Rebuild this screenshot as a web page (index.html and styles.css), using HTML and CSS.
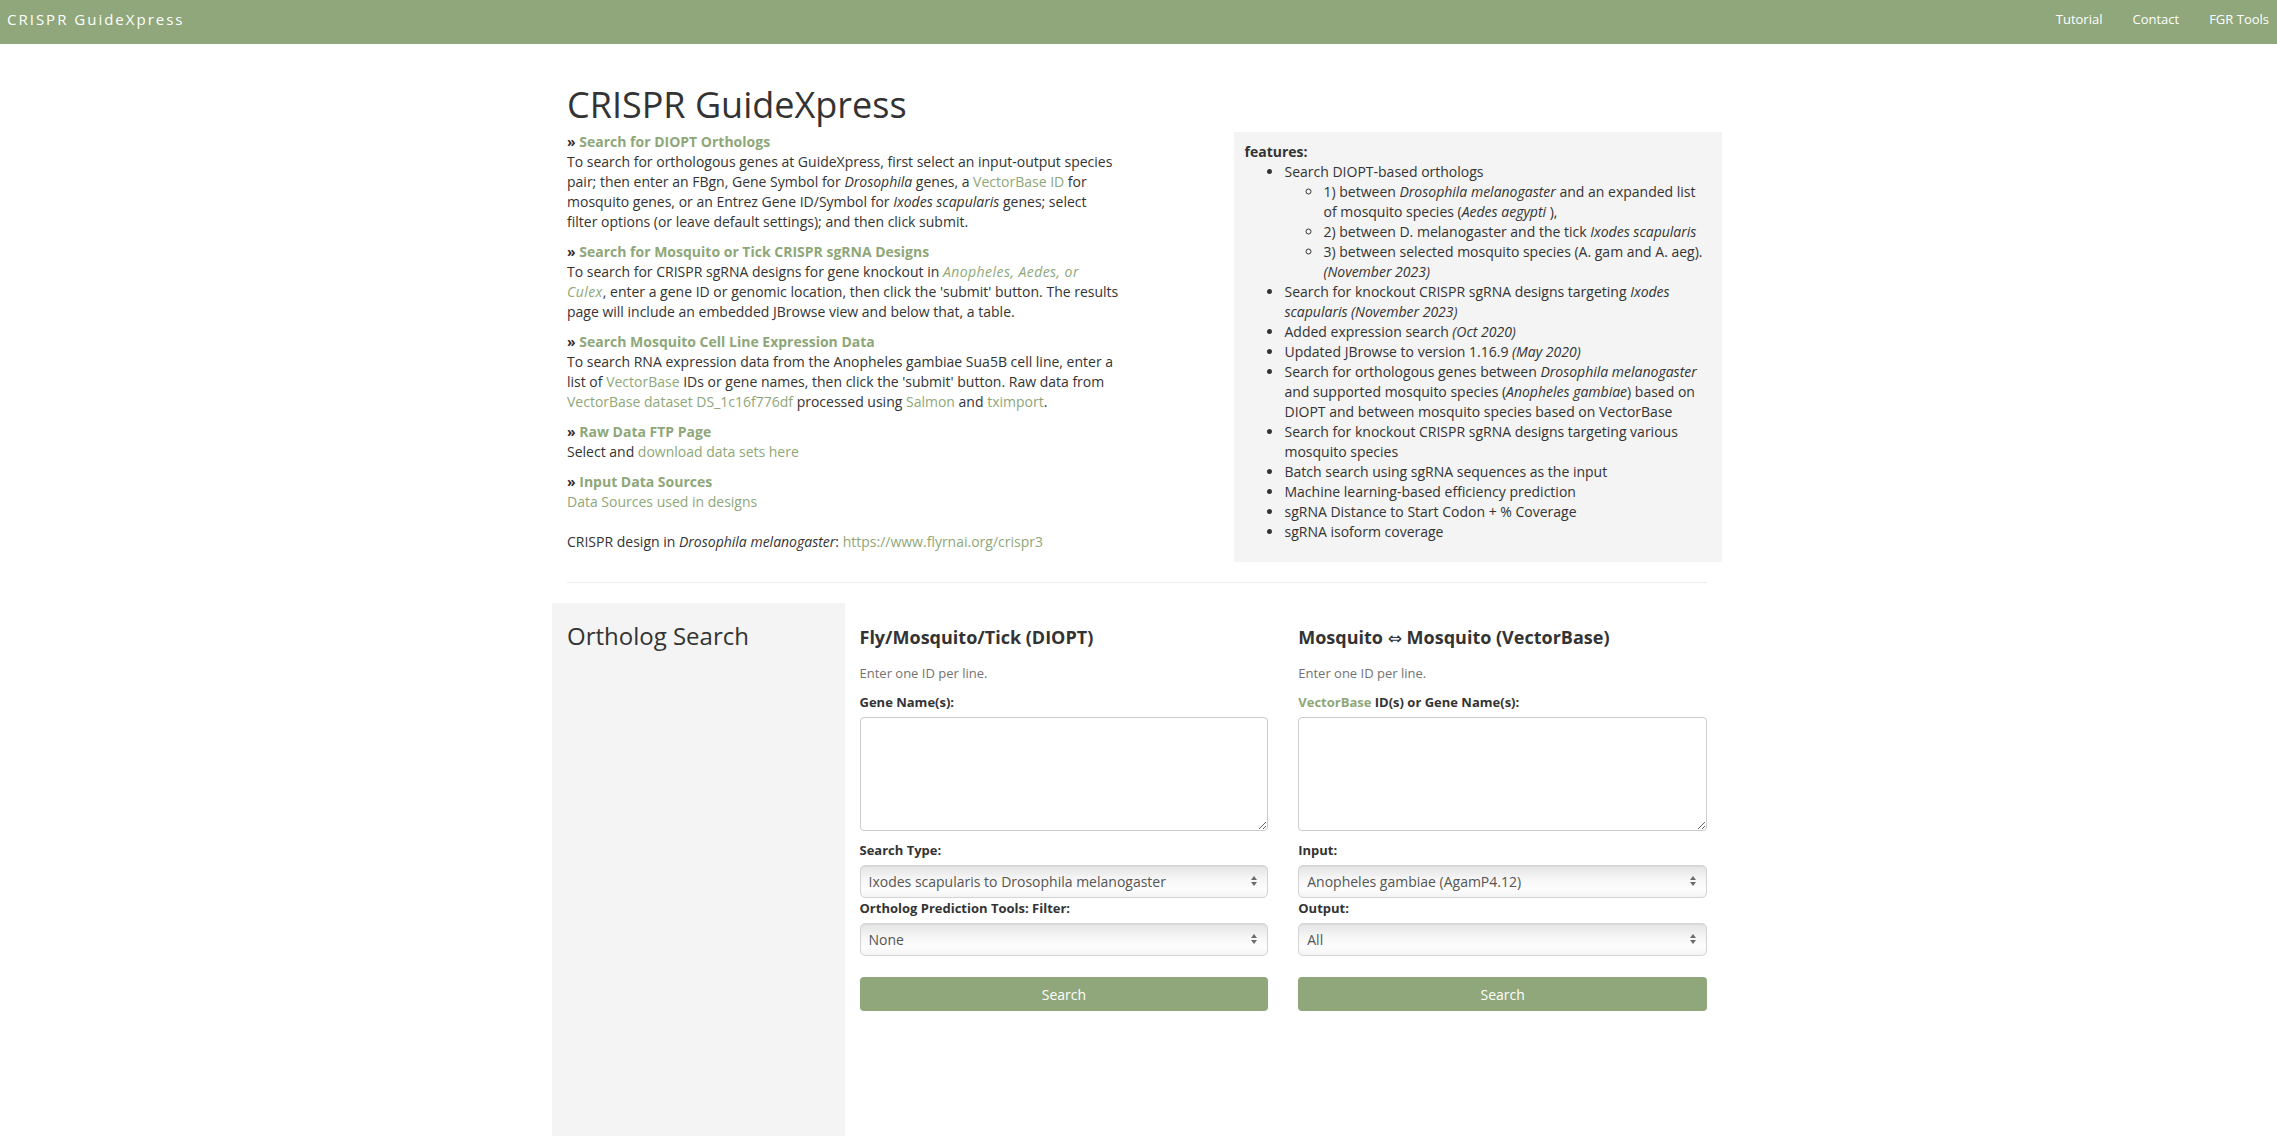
FILE: index.html
```html
<!DOCTYPE html>
<html lang="en">
<head>
<meta charset="utf-8">
<title>CRISPR GuideXpress</title>
<link rel="stylesheet" href="styles.css">
</head>
<body>
<nav class="navbar">
  <a class="brand" href="#">CRISPR GuideXpress</a>
  <ul class="nav-links">
    <li><a href="#">Tutorial</a></li>
    <li><a href="#">Contact</a></li>
    <li><a href="#">FGR Tools</a></li>
  </ul>
</nav>

<div class="container">
  <div class="intro-row">
    <div class="intro-col">
      <h1 class="title">CRISPR GuideXpress</h1>
      <p class="para"><b>» <a class="head-link" href="#">Search for DIOPT Orthologs</a></b><br>
        To search for orthologous genes at GuideXpress, first select an input-output species pair; then enter an FBgn, Gene Symbol for <i>Drosophila</i> genes, a <a href="#">VectorBase ID</a> for mosquito genes, or an Entrez Gene ID/Symbol for <i>Ixodes scapularis</i> genes; select filter options (or leave default settings); and then click submit.</p>
      <p class="para"><b>» <a class="head-link" href="#">Search for Mosquito or Tick CRISPR sgRNA Designs</a></b><br>
        To search for CRISPR sgRNA designs for gene knockout in <a class="species-link" href="#"><i>Anopheles, Aedes, or Culex</i></a>, enter a gene ID or genomic location, then click the 'submit' button. The results page will include an embedded JBrowse view and below that, a table.</p>
      <p class="para"><b>» <a class="head-link" href="#">Search Mosquito Cell Line Expression Data</a></b><br>
        To search RNA expression data from the Anopheles gambiae Sua5B cell line, enter a list of <a href="#">VectorBase</a> IDs or gene names, then click the 'submit' button. Raw data from <a href="#">VectorBase dataset DS_1c16f776df</a> processed using <a href="#">Salmon</a> and <a href="#">tximport</a>.</p>
      <p class="para"><b>» <a class="head-link" href="#">Raw Data FTP Page</a></b><br>
        Select and <a href="#">download data sets here</a></p>
      <p class="para"><b>» <a class="head-link" href="#">Input Data Sources</a></b><br>
        <a href="#">Data Sources used in designs</a></p>
      <p class="para para-gap">CRISPR design in <i>Drosophila melanogaster</i>: <a href="#">https://www.flyrnai.org/crispr3</a></p>
    </div>
    <div class="features">
      <b>features:</b>
      <ul class="feat-list">
        <li>Search DIOPT-based orthologs
          <ul class="sub-list">
            <li>1) between <i>Drosophila melanogaster</i> and an expanded list of mosquito species (<i>Aedes aegypti</i> ),</li>
            <li>2) between D. melanogaster and the tick <i>Ixodes scapularis</i></li>
            <li>3) between selected mosquito species (A. gam and A. aeg). <i>(November 2023)</i></li>
          </ul>
        </li>
        <li>Search for knockout CRISPR sgRNA designs targeting <i>Ixodes scapularis (November 2023)</i></li>
        <li>Added expression search <i>(Oct 2020)</i></li>
        <li>Updated JBrowse to version 1.16.9 <i>(May 2020)</i></li>
        <li>Search for orthologous genes between <i>Drosophila melanogaster</i> and supported mosquito species (<i>Anopheles gambiae</i>) based on DIOPT and between mosquito species based on VectorBase</li>
        <li>Search for knockout CRISPR sgRNA designs targeting various mosquito species</li>
        <li>Batch search using sgRNA sequences as the input</li>
        <li>Machine learning-based efficiency prediction</li>
        <li>sgRNA Distance to Start Codon + % Coverage</li>
        <li>sgRNA isoform coverage</li>
      </ul>
    </div>
  </div>

  <hr class="divider">

  <div class="search-row">
    <div class="sidebar">
      <h3 class="side-title">Ortholog Search</h3>
    </div>
    <div class="forms">
      <div class="form-row">
        <form class="form-col">
          <h4 class="form-title">Fly/Mosquito/Tick (DIOPT)</h4>
          <p class="help">Enter one ID per line.</p>
          <label class="lbl">Gene Name(s):</label>
          <textarea class="ta"></textarea>
          <label class="lbl">Search Type:</label>
          <div class="sel sel-first">
            <select class="sel-in">
              <option>Ixodes scapularis to Drosophila melanogaster</option>
            </select>
            <svg class="sel-arrow" width="8" height="12" viewBox="0 0 8 12"><path d="M4 1 L7 5 H1 Z M4 11 L7 7 H1 Z" fill="#6b6b6b"/></svg>
          </div>
          <label class="lbl">Ortholog Prediction Tools: Filter:</label>
          <div class="sel">
            <select class="sel-in">
              <option>None</option>
            </select>
            <svg class="sel-arrow" width="8" height="12" viewBox="0 0 8 12"><path d="M4 1 L7 5 H1 Z M4 11 L7 7 H1 Z" fill="#6b6b6b"/></svg>
          </div>
          <button class="btn" type="button">Search</button>
        </form>
        <form class="form-col">
          <h4 class="form-title">Mosquito <span class="arrow-sym">⇔</span> Mosquito (VectorBase)</h4>
          <p class="help">Enter one ID per line.</p>
          <label class="lbl"><a href="#">VectorBase</a> ID(s) or Gene Name(s):</label>
          <textarea class="ta"></textarea>
          <label class="lbl">Input:</label>
          <div class="sel sel-first">
            <select class="sel-in">
              <option>Anopheles gambiae (AgamP4.12)</option>
            </select>
            <svg class="sel-arrow" width="8" height="12" viewBox="0 0 8 12"><path d="M4 1 L7 5 H1 Z M4 11 L7 7 H1 Z" fill="#6b6b6b"/></svg>
          </div>
          <label class="lbl">Output:</label>
          <div class="sel">
            <select class="sel-in">
              <option>All</option>
            </select>
            <svg class="sel-arrow" width="8" height="12" viewBox="0 0 8 12"><path d="M4 1 L7 5 H1 Z M4 11 L7 7 H1 Z" fill="#6b6b6b"/></svg>
          </div>
          <button class="btn" type="button">Search</button>
        </form>
      </div>
    </div>
  </div>
</div>
</body>
</html>
```
FILE: styles.css
```css
* { box-sizing: border-box; }

body {
  margin: 0;
  font-family: "Open Sans", "Noto Sans", sans-serif;
  font-size: 14px;
  line-height: 20px;
  color: #333;
  background: #fff;
}

a { color: #8ea778; text-decoration: none; }

.navbar {
  height: 44px;
  background: #8fa77a;
  display: flex;
  align-items: center;
  justify-content: space-between;
  padding: 0 8px 6px 7px;
}

.brand {
  color: #fff;
  font-size: 15px;
  letter-spacing: 2px;
}

.nav-links {
  list-style: none;
  margin: 0;
  padding: 0;
  display: flex;
  gap: 30px;
}

.nav-links a {
  color: #fff;
  font-size: 13px;
}

.container {
  width: 1170px;
  margin: 0 0 0 calc(50% - 586.5px);
  padding: 41px 15px 0;
}

.intro-row {
  display: flex;
  margin: 0 -15px;
  align-items: flex-start;
}

.intro-col {
  width: 50%;
  padding: 0 17px 0 15px;
}

.title {
  font-size: 36px;
  line-height: 39.6px;
  font-weight: 400;
  margin: 0 0 7px;
}

.para { margin: 0 0 10px; }
.para-gap { margin-top: 20px; }

.head-link { font-weight: 700; }

.species-link { letter-spacing: 0.45px; }

.features {
  width: 41.6667%;
  margin-left: 8.3333%;
  margin-top: 47px;
  background: #f4f4f4;
  padding: 10px;
}

.feat-list {
  margin: 0 0 10px;
  padding-left: 40px;
}

.sub-list {
  margin: 0;
  padding-left: 39px;
  list-style: circle;
}

.divider {
  border: 0;
  border-top: 1px solid #eee;
  margin: 20px 0;
}

.search-row {
  display: flex;
  margin: 0 -15px;
}

.sidebar {
  width: 25%;
  background: #f4f4f4;
  padding: 0 15px;
  min-height: 620px;
}

.side-title {
  font-size: 24px;
  line-height: 26.4px;
  font-weight: 400;
  margin: 20px 0 10px;
}

.forms {
  width: 75%;
  padding: 0 15px;
}

.form-row {
  display: flex;
  margin: 0 -15px;
}

.form-col {
  width: 50%;
  padding: 0 15px;
  margin: 0;
}

.form-title {
  font-size: 18px;
  line-height: 20px;
  height: 20px;
  font-weight: 700;
  margin: 24px 0 16px;
}

.arrow-sym {
  font-weight: 400;
  font-family: "DejaVu Sans", sans-serif;
  font-size: 17px;
  line-height: 0;
}

.help {
  font-size: 13px;
  color: #737373;
  margin: 0 0 9px;
}

.lbl {
  display: block;
  font-size: 13px;
  font-weight: 700;
  line-height: 20px;
  margin-bottom: 5px;
}

.ta {
  display: block;
  width: 100%;
  height: 114px;
  border: 1px solid #cbcbcb;
  border-radius: 4px;
  margin: 0 0 9px;
  font-family: inherit;
}

.sel {
  position: relative;
  margin: 0 0 5px;
}

.sel-first { margin-top: 2px; margin-bottom: 0; }

.sel-in {
  -webkit-appearance: none;
  appearance: none;
  display: block;
  width: 100%;
  height: 33px;
  border: 1px solid #d4d4d4;
  border-radius: 5px;
  padding: 0 24px 0 8px;
  font-family: inherit;
  font-size: 14px;
  color: #555;
  background: linear-gradient(#e4e4e4, #f7f7f7 45%, #fdfdfd 75%, #f3f3f3);
  box-shadow: inset 0 1px 1px rgba(0,0,0,0.05);
}

.sel-arrow {
  position: absolute;
  right: 10px;
  top: 10px;
  pointer-events: none;
}

.btn {
  display: block;
  width: 100%;
  height: 34px;
  margin-top: 21px;
  background: #8fa77a;
  color: #fff;
  border: 0;
  border-radius: 4px;
  font-family: inherit;
  font-size: 14px;
}
```
